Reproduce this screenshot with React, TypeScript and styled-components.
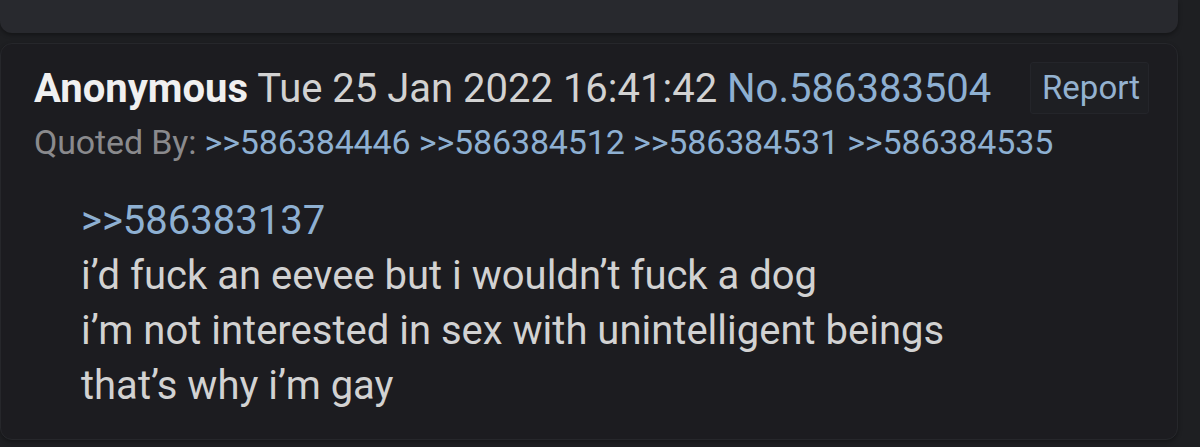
import React from 'react';
import styled, { createGlobalStyle } from 'styled-components';

const GlobalStyle = createGlobalStyle`
  html, body {
    margin: 0;
    padding: 0;
    background: #1e1f22;
    font-family: Roboto, "Liberation Sans", sans-serif;
  }
`;

const Page = styled.div`
  width: 1200px;
  height: 447px;
  overflow: hidden;
  display: flex;
  flex-direction: column;
  gap: 10px;
  padding-right: 22px;
  box-sizing: border-box;
  background: #1e1f22;
`;

const PrevCard = styled.div`
  height: 33px;
  background: #28292e;
  border-radius: 0 0 12px 12px;
  box-shadow: 0 2px 4px rgba(0, 0, 0, 0.35);
`;

const Card = styled.div`
  height: 397px;
  background: #1c1c20;
  border: 1px solid #26272b;
  border-radius: 12px;
  padding: 18px 28px 0 33px;
  box-sizing: border-box;
  box-shadow: 0 2px 4px rgba(0, 0, 0, 0.3);
`;

const HeaderRow = styled.div`
  display: flex;
  align-items: center;
  justify-content: space-between;
  height: 52px;
`;

const Meta = styled.div`
  font-size: 40px;
  color: #d2d2d2;
  white-space: nowrap;
`;

const Name = styled.span`
  font-weight: 700;
  color: #f0f0f0;
`;

const PostNo = styled.span`
  color: #8eb0d2;
`;

const ReportButton = styled.div`
  font-size: 33px;
  color: #94b2d0;
  padding: 5px 8px 6px 11px;
  border: 1px solid #24252a;
  background: #1e1f23;
  border-radius: 3px;
`;

const QuotedRow = styled.div`
  font-size: 34px;
  color: #8a8a8d;
  white-space: nowrap;
  margin-top: 8px;
  letter-spacing: -0.15px;
`;

const Link = styled.span`
  color: #8eb0d2;
`;

const Body = styled.div`
  margin-top: 31px;
  padding-left: 47px;
  font-size: 40px;
  line-height: 55px;
  color: #d2d2d2;
`;

const Line = styled.div<{ $quote?: boolean }>`
  color: ${(p) => (p.$quote ? '#8eb0d2' : '#d2d2d2')};
`;

const quoters = ['586384446', '586384512', '586384531', '586384535'];

export default function App() {
  return (
    <>
      <GlobalStyle />
      <Page>
        <PrevCard />
        <Card>
          <HeaderRow>
            <Meta>
              <Name>Anonymous</Name> Tue 25 Jan 2022 16:41:42 <PostNo>No.586383504</PostNo>
            </Meta>
            <ReportButton>Report</ReportButton>
          </HeaderRow>
          <QuotedRow>
            Quoted By:
            {quoters.map((q) => (
              <React.Fragment key={q}>
                {' '}
                <Link>&gt;&gt;{q}</Link>
              </React.Fragment>
            ))}
          </QuotedRow>
          <Body>
            <Line $quote>&gt;&gt;586383137</Line>
            <Line>i’d fuck an eevee but i wouldn’t fuck a dog</Line>
            <Line>i’m not interested in sex with unintelligent beings</Line>
            <Line>that’s why i’m gay</Line>
          </Body>
        </Card>
      </Page>
    </>
  );
}
